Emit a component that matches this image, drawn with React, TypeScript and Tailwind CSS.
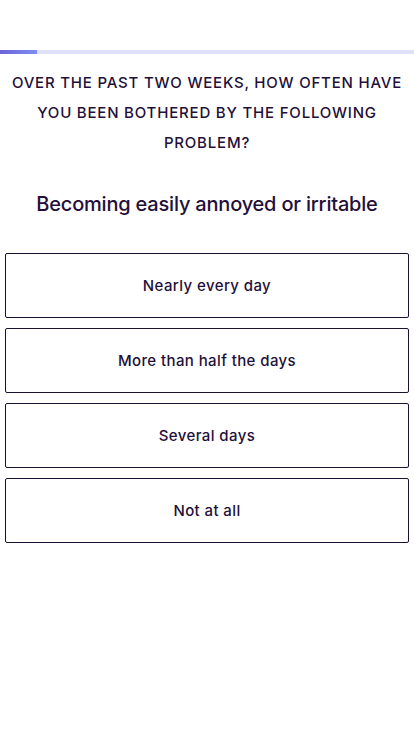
import React from "react";

const options = ["Nearly every day", "More than half the days", "Several days", "Not at all"];

export default function App() {
  return (
    <div className="min-h-[736px] w-[414px] bg-white text-[#230f3a]" style={{ fontFamily: "Inter, 'Open Sans', sans-serif" }}>
      <div className="pt-[50px]">
        <div className="h-[4px] w-full bg-[#dde0f6]">
          <div className="h-full w-[37px] bg-gradient-to-r from-[#6c66d8] to-[#7f8cf0]" />
        </div>
      </div>
      <div className="mt-[14px] px-[6px] text-center text-[15px] font-medium leading-[30px] tracking-[0.8px]">
        OVER THE PAST TWO WEEKS, HOW OFTEN HAVE YOU BEEN BOTHERED BY THE FOLLOWING PROBLEM?
      </div>
      <div className="mt-[32px] text-center text-[20px] font-medium leading-[28px] tracking-[-0.2px]">
        Becoming easily annoyed or irritable
      </div>
      <div className="mt-[35px] flex flex-col gap-[10px] px-[5px]">
        {options.map((o) => (
          <button
            key={o}
            className="flex h-[65px] w-full items-center justify-center rounded-[2px] border border-[#1c1030] bg-white pt-[2px] text-[15px] font-medium tracking-[0.4px] text-[#230f3a]"
          >
            {o}
          </button>
        ))}
      </div>
    </div>
  );
}
